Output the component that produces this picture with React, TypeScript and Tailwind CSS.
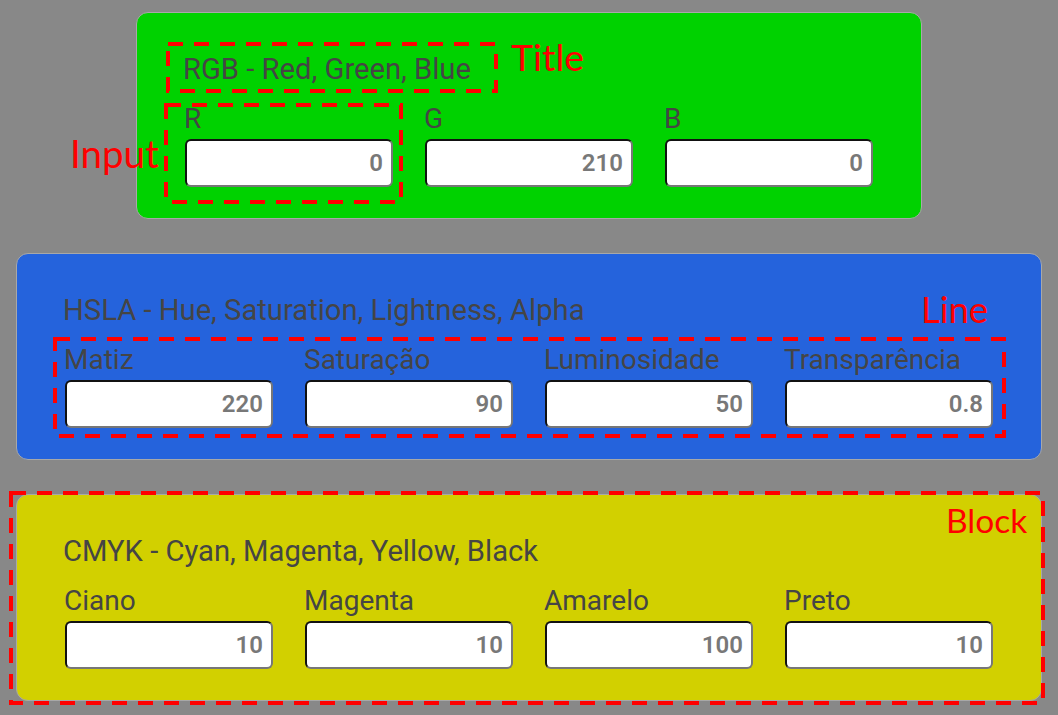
import React from "react";

interface Field {
  label: string;
  value: string;
}

interface Block {
  title: string;
  bg: string;
  fields: Field[];
}

const blocks: Block[] = [
  {
    title: "RGB - Red, Green, Blue",
    bg: "bg-[#00d200]",
    fields: [
      { label: "R", value: "0" },
      { label: "G", value: "210" },
      { label: "B", value: "0" },
    ],
  },
  {
    title: "HSLA - Hue, Saturation, Lightness, Alpha",
    bg: "bg-[#2563dc]",
    fields: [
      { label: "Matiz", value: "220" },
      { label: "Saturação", value: "90" },
      { label: "Luminosidade", value: "50" },
      { label: "Transparência", value: "0.8" },
    ],
  },
  {
    title: "CMYK - Cyan, Magenta, Yellow, Black",
    bg: "bg-[#d2d000]",
    fields: [
      { label: "Ciano", value: "10" },
      { label: "Magenta", value: "10" },
      { label: "Amarelo", value: "100" },
      { label: "Preto", value: "10" },
    ],
  },
];

// caixas tracejadas das anotações (por cima do conteúdo)
const marks = [
  { x: 166, y: 42, w: 332, h: 51 },
  { x: 164, y: 103, w: 239, h: 101 },
  { x: 53, y: 337, w: 953, h: 101 },
  { x: 9, y: 491, w: 1036, h: 214 },
];

function ColorBlock({ block }: { block: Block }) {
  return (
    <div
      className={`mx-auto w-fit rounded-[12px] border border-[#a8a8a8] px-[48px] pt-[40px] pb-[31px] ${block.bg}`}
    >
      <div className="-ml-[2px] text-[29.2px] leading-[32px] text-[#454545]">{block.title}</div>
      <div className="mt-[18px] flex gap-[32px]">
        {block.fields.map((f) => (
          <div key={f.label} className="flex flex-col">
            <span className="-ml-[1px] text-[28px] leading-[32px] text-[#454545]">{f.label}</span>
            <input
              readOnly
              value={f.value}
              className="mt-[4px] h-[48px] w-[208px] rounded-[6px] border-2 border-t-[#111] border-l-[#111] border-b-[#777] border-r-[#777] bg-white pr-[8px] text-right text-[24px] font-semibold text-[#787878] outline-none"
            />
          </div>
        ))}
      </div>
    </div>
  );
}

export default function App() {
  return (
    <div
      className="relative h-[715px] w-[1058px] overflow-hidden bg-[#888888] pt-[12px]"
      style={{ fontFamily: "Roboto, 'Liberation Sans', sans-serif" }}
    >
      <div className="flex flex-col gap-[34px]">
        {blocks.map((b) => (
          <ColorBlock key={b.title} block={b} />
        ))}
      </div>

      <svg className="pointer-events-none absolute inset-0" width="1058" height="715">
        {marks.map((m, i) => (
          <rect
            key={i}
            x={m.x + 2}
            y={m.y + 2}
            width={m.w - 4}
            height={m.h - 4}
            fill="none"
            stroke="#ff0000"
            strokeWidth="4"
            strokeDasharray="15 11"
          />
        ))}
      </svg>

      <div className="pointer-events-none absolute inset-0 text-[#ff0000]" style={{ fontFamily: "Lato, 'Open Sans', sans-serif" }}>
        <div className="absolute left-[511px] top-[38px] text-[37.5px] leading-none">Title</div>
        <div className="absolute left-[70px] top-[134px] text-[38.5px] leading-none">Input</div>
        <div className="absolute left-[921px] top-[291px] text-[36.5px] leading-none">Line</div>
        <div className="absolute left-[946px] top-[504px] text-[33.5px] leading-none">Block</div>
      </div>
    </div>
  );
}
